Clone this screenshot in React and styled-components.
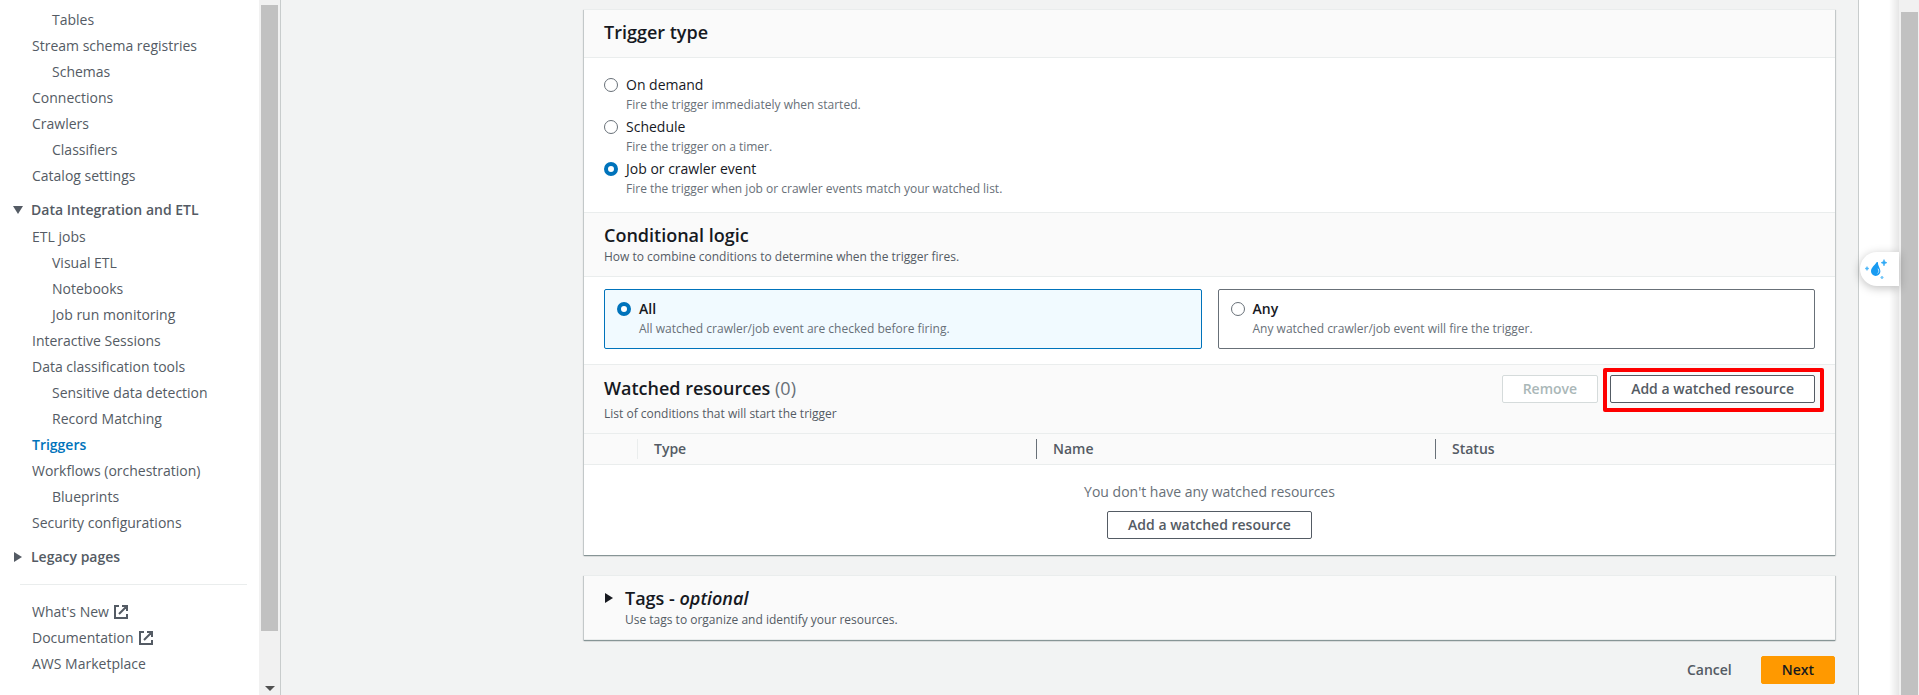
import React, { useState } from 'react';
import styled, { createGlobalStyle } from 'styled-components';

const GlobalStyle = createGlobalStyle`
  *, *::before, *::after { box-sizing: border-box; }
  body {
    margin: 0;
    background: #fff;
    color: #16191f;
    font-family: "Open Sans", "Noto Sans", sans-serif;
    font-size: 14px;
    line-height: 22px;
  }
  button { font: inherit; cursor: pointer; }
  h2, p { margin: 0; }
`;

const Shell = styled.div`
  display: flex;
  height: 100vh;
  overflow: hidden;
`;

/* ---------- side navigation ---------- */

const Sidebar = styled.aside`
  display: flex;
  flex: none;
  width: 281px;
  background: #fff;
  border-right: 1px solid #c8cccc;
`;

const NavScroll = styled.nav`
  flex: 1;
  overflow: hidden;
  padding-top: 7px;
`;

const NavList = styled.ul`
  list-style: none;
  margin: 0;
  padding: 0;
`;

const NavItem = styled.li`
  display: flex;
  align-items: center;
  height: 26px;
  padding-left: ${(p) => (p.$nested ? 52 : 32)}px;
`;

const NavLink = styled.a`
  display: flex;
  align-items: center;
  gap: 5px;
  color: ${(p) => (p.$active ? '#0073bb' : '#545b64')};
  font-weight: ${(p) => (p.$active ? 600 : 400)};
  text-decoration: none;
  white-space: nowrap;
`;

const NavHeading = styled.button`
  display: flex;
  align-items: center;
  gap: 8px;
  margin: 10px 0 3px;
  padding: 0 0 0 13px;
  border: 0;
  background: none;
  color: #545b64;
  font-weight: 600;
  line-height: 22px;
`;

const NavDivider = styled.hr`
  margin: 16px 12px 14px 20px;
  border: 0;
  border-top: 1px solid #eaeded;
`;

const Track = styled.div`
  display: flex;
  flex-direction: column;
  flex: none;
  width: ${(p) => p.$width}px;
  padding: ${(p) => p.$pad};
  background: #f1f1f1;
`;

const Thumb = styled.div`
  flex: ${(p) => p.$grow} 0 0;
  background: #c1c1c1;
`;

const TrackEnd = styled.div`
  display: flex;
  align-items: flex-end;
  justify-content: center;
  flex: 2 0 0;
  padding-bottom: 4px;
`;

/* ---------- content ---------- */

const Main = styled.main`
  flex: 1;
  min-width: 0;
  padding: 9px 23px 0 303px;
  background: #f2f3f3;
  border-right: 1px solid #c8cccc;
`;

const Form = styled.form`
  display: flex;
  flex-direction: column;
`;

const Card = styled.section`
  margin-bottom: 20px;
  border-top: 1px solid #eaeded;
  background: #fff;
  box-shadow: 0 1px 0 0 #879596, 0 1px 1px 0 rgba(0, 28, 36, 0.3),
    1px 1px 1px 0 rgba(0, 28, 36, 0.15), -1px 1px 1px 0 rgba(0, 28, 36, 0.15);
`;

const SectionHeader = styled.header`
  display: flex;
  align-items: flex-start;
  justify-content: space-between;
  padding: ${(p) => p.$pad};
  background: #fafafa;
  border-top: ${(p) => (p.$first ? '0' : '1px solid #eaeded')};
  border-bottom: 1px solid #eaeded;
`;

const HeaderText = styled.div`
  padding-top: 2px;
`;

const Title = styled.h2`
  display: block;
  font-size: 18px;
  font-weight: 600;
  line-height: 22px;
`;

const Counter = styled.span`
  color: #687078;
  font-weight: 400;
`;

const Description = styled.p`
  display: block;
  margin-top: ${(p) => p.$gap || 0}px;
  color: ${(p) => (p.$muted ? '#687078' : '#545b64')};
  font-size: 12px;
  line-height: 18px;
`;

const RadioGroup = styled.div`
  display: grid;
  gap: 2px;
  padding: 16px 20px 14px;
`;

const Tiles = styled.div`
  display: grid;
  grid-template-columns: 1fr 1fr;
  gap: 16px;
  padding: 12px 20px 15px;
`;

const Option = styled.label`
  display: flex;
  gap: 8px;
  cursor: pointer;
`;

const Tile = styled(Option)`
  padding: 8px 12px 10px;
  border: 1px solid ${(p) => (p.$checked ? '#0073bb' : '#687078')};
  border-radius: 2px;
  background: ${(p) => (p.$checked ? '#f1faff' : '#fff')};
`;

const Radio = styled.input.attrs({ type: 'radio' })`
  appearance: none;
  flex: none;
  width: 14px;
  height: 14px;
  margin: 4px 0 0;
  border: 1px solid #687078;
  border-radius: 50%;
  background: #fff;

  &:checked {
    border: 4px solid #0073bb;
  }
`;

const OptionText = styled.span`
  display: flex;
  flex-direction: column;
`;

const OptionLabel = styled.span`
  font-weight: ${(p) => (p.$strong ? 600 : 400)};
`;

const Actions = styled.div`
  display: flex;
  gap: 12px;
`;

const Button = styled.button`
  height: 28px;
  padding: 0 20px;
  border: 1px solid #545b64;
  border-radius: 2px;
  background: #fff;
  color: #545b64;
  font-weight: 600;
  line-height: 20px;

  &:disabled {
    border-color: #d5dbdb;
    color: #aab7b8;
  }
`;

const PrimaryButton = styled(Button)`
  border-color: #ff9900;
  background: #ff9900;
  color: #16191f;
`;

const LinkButton = styled(Button)`
  border-color: transparent;
  background: transparent;
`;

const Highlight = styled.div`
  position: relative;

  &::after {
    content: "";
    position: absolute;
    inset: -7px -9px -9px -7px;
    border: 4px solid #fe0000;
    border-radius: 2px;
    pointer-events: none;
  }
`;

const Table = styled.table`
  width: 100%;
  table-layout: fixed;
  border-collapse: separate;
  border-spacing: 0;
`;

const HeadCell = styled.th`
  width: ${(p) => (p.$select ? '54px' : 'auto')};
  padding: 5px 0;
  background: #fafafa;
  border-bottom: 1px solid #eaeded;
  color: #545b64;
  font-weight: 600;
  text-align: left;
`;

const HeadContent = styled.div`
  height: 20px;
  padding-left: 16px;
  border-right: ${(p) => (p.$edge ? `1px solid ${p.$edge}` : '0')};
  line-height: 20px;
`;

const EmptyCell = styled.td`
  padding: 16px 20px;
  color: #687078;
`;

const EmptyState = styled.div`
  display: flex;
  flex-direction: column;
  align-items: center;
  gap: 8px;
`;

const TagsToggle = styled.button`
  display: flex;
  gap: 11px;
  width: 100%;
  padding: 11px 20px 10px;
  border: 0;
  border-bottom: 1px solid #eaeded;
  background: #fafafa;
  color: #16191f;
  text-align: left;
`;

const TagsArrow = styled.span`
  display: flex;
  align-items: center;
  height: 22px;
`;

const Footer = styled.div`
  display: flex;
  justify-content: flex-end;
  gap: 8px;
  margin-top: -4px;
`;

/* ---------- right edge ---------- */

const HelpRail = styled.aside`
  position: relative;
  flex: none;
  width: 40px;
  background: linear-gradient(to left, #e6e6e6, #fff 10px);
`;

const Assistant = styled.button`
  position: absolute;
  top: 252px;
  right: 0;
  display: flex;
  align-items: center;
  width: 39px;
  height: 34px;
  padding: 0 0 0 3px;
  border: 0;
  border-radius: 17px 0 0 17px;
  background: #fff;
  box-shadow: 0 2px 10px rgba(0, 0, 0, 0.25);
`;

const Triangle = ({ dir, fill = '#545b64' }) => (
  <svg width="10" height="10" viewBox="0 0 10 10" aria-hidden="true">
    <path d={dir === 'down' ? 'M0 1h10L5 9z' : 'M1 0l8 5-8 5z'} fill={fill} />
  </svg>
);

const ExternalIcon = () => (
  <svg width="14" height="14" viewBox="0 0 14 14" fill="none" stroke="#545b64" strokeWidth="2" aria-hidden="true">
    <path d="M5 1H1v12h12V9M8 1h5v5M13 1L5 9" />
  </svg>
);

const DropIcon = () => (
  <svg width="24" height="22" viewBox="0 0 24 22" aria-hidden="true">
    <path d="M13.800 4C11.500 7.500 8 9.700 8 13.300a4.700 4.700 0 0 0 9.400 0c0-2.800-2.600-5.300-2.600-9.300z" fill="#189bf2" />
    <path d="M15.200 11c1 1.600.8 3.200-.4 4.200" stroke="#bfe4ff" fill="none" strokeLinecap="round" />
    <path d="M21 1.500l.9 2.300 2.100.9-2.100.9L21 8l-.9-2.400-2.100-.9 2.100-.9z" fill="#2ea8f5" stroke="#2ea8f5" strokeWidth=".5" />
    <path d="M4 8.500l.7 1.300 1.300.7-1.300.7L4 12.500l-.7-1.300L2 10.500l1.300-.7z" fill="#4cb6f8" stroke="#4cb6f8" strokeWidth=".5" />
    <path d="M19 18.200l.4.900.9.400-.9.400-.4.900-.4-.9-.9-.4.9-.4z" fill="#6cc4f9" stroke="#6cc4f9" />
  </svg>
);

const CATALOG = [
  { label: 'Tables', nested: true },
  { label: 'Stream schema registries' },
  { label: 'Schemas', nested: true },
  { label: 'Connections' },
  { label: 'Crawlers' },
  { label: 'Classifiers', nested: true },
  { label: 'Catalog settings' },
];

const ETL = [
  { label: 'ETL jobs' },
  { label: 'Visual ETL', nested: true },
  { label: 'Notebooks', nested: true },
  { label: 'Job run monitoring', nested: true },
  { label: 'Interactive Sessions' },
  { label: 'Data classification tools' },
  { label: 'Sensitive data detection', nested: true },
  { label: 'Record Matching', nested: true },
  { label: 'Triggers', active: true },
  { label: 'Workflows (orchestration)' },
  { label: 'Blueprints', nested: true },
  { label: 'Security configurations' },
];

const RESOURCES = [
  { label: "What's New", external: true },
  { label: 'Documentation', external: true },
  { label: 'AWS Marketplace' },
];

const TRIGGER_TYPES = [
  { id: 'demand', label: 'On demand', hint: 'Fire the trigger immediately when started.' },
  { id: 'schedule', label: 'Schedule', hint: 'Fire the trigger on a timer.' },
  { id: 'event', label: 'Job or crawler event', hint: 'Fire the trigger when job or crawler events match your watched list.' },
];

const LOGIC = [
  { id: 'all', label: 'All', hint: 'All watched crawler/job event are checked before firing.' },
  { id: 'any', label: 'Any', hint: 'Any watched crawler/job event will fire the trigger.' },
];

const NavGroup = ({ items }) => (
  <NavList>
    {items.map(({ label, nested, active, external }) => (
      <NavItem key={label} $nested={nested}>
        <NavLink href="#" $active={active} aria-current={active ? 'page' : undefined}>
          {label}
          {external && <ExternalIcon />}
        </NavLink>
      </NavItem>
    ))}
  </NavList>
);

const OptionBody = ({ label, hint, strong }) => (
  <OptionText>
    <OptionLabel $strong={strong}>{label}</OptionLabel>
    <Description as="span" $muted>{hint}</Description>
  </OptionText>
);

export default function App() {
  const [type, setType] = useState('event');
  const [logic, setLogic] = useState('all');

  return (
    <Shell>
      <GlobalStyle />
      <Sidebar>
        <NavScroll aria-label="AWS Glue">
          <NavGroup items={CATALOG} />
          <NavHeading type="button" aria-expanded="true">
            <Triangle dir="down" />
            Data Integration and ETL
          </NavHeading>
          <NavGroup items={ETL} />
          <NavHeading type="button" aria-expanded="false">
            <Triangle dir="right" />
            Legacy pages
          </NavHeading>
          <NavDivider />
          <NavGroup items={RESOURCES} />
        </NavScroll>
        <Track $width={21} $pad="5px 2px 0 2px" aria-hidden="true">
          <Thumb $grow={21} />
          <TrackEnd>
            <svg width="10" height="5" viewBox="0 0 10 5">
              <path d="M0 0h10L5 5z" fill="#505050" />
            </svg>
          </TrackEnd>
        </Track>
      </Sidebar>

      <Main>
        <Form onSubmit={(e) => e.preventDefault()}>
          <Card>
            <SectionHeader $first $pad="11px 20px 14px">
              <Title id="trigger-type">Trigger type</Title>
            </SectionHeader>
            <RadioGroup role="radiogroup" aria-labelledby="trigger-type">
              {TRIGGER_TYPES.map((t) => (
                <Option key={t.id}>
                  <Radio name="type" checked={type === t.id} onChange={() => setType(t.id)} />
                  <OptionBody label={t.label} hint={t.hint} />
                </Option>
              ))}
            </RadioGroup>

            <SectionHeader $pad="9px 20px 10px">
              <HeaderText>
                <Title id="logic">Conditional logic</Title>
                <Description $gap={2}>How to combine conditions to determine when the trigger fires.</Description>
              </HeaderText>
            </SectionHeader>
            <Tiles role="radiogroup" aria-labelledby="logic">
              {LOGIC.map((l) => (
                <Tile key={l.id} $checked={logic === l.id}>
                  <Radio name="logic" checked={logic === l.id} onChange={() => setLogic(l.id)} />
                  <OptionBody label={l.label} hint={l.hint} strong />
                </Tile>
              ))}
            </Tiles>

            <SectionHeader $pad="10px 20px">
              <HeaderText>
                <Title>
                  Watched resources <Counter>(0)</Counter>
                </Title>
                <Description $gap={6}>List of conditions that will start the trigger</Description>
              </HeaderText>
              <Actions>
                <Button type="button" disabled>Remove</Button>
                <Highlight>
                  <Button type="button">Add a watched resource</Button>
                </Highlight>
              </Actions>
            </SectionHeader>
            <Table>
              <thead>
                <tr>
                  <HeadCell $select aria-label="Selection">
                    <HeadContent $edge="#eaeded" />
                  </HeadCell>
                  <HeadCell scope="col">
                    <HeadContent $edge="#687078">Type</HeadContent>
                  </HeadCell>
                  <HeadCell scope="col">
                    <HeadContent $edge="#687078">Name</HeadContent>
                  </HeadCell>
                  <HeadCell scope="col">
                    <HeadContent>Status</HeadContent>
                  </HeadCell>
                </tr>
              </thead>
              <tbody>
                <tr>
                  <EmptyCell colSpan={4}>
                    <EmptyState>
                      <p>You don't have any watched resources</p>
                      <Button type="button">Add a watched resource</Button>
                    </EmptyState>
                  </EmptyCell>
                </tr>
              </tbody>
            </Table>
          </Card>

          <Card>
            <TagsToggle type="button" aria-expanded="false">
              <TagsArrow>
                <Triangle dir="right" fill="#16191f" />
              </TagsArrow>
              <span>
                <Title as="span">
                  Tags - <em>optional</em>
                </Title>
                <Description as="span" $gap={2}>Use tags to organize and identify your resources.</Description>
              </span>
            </TagsToggle>
          </Card>

          <Footer>
            <LinkButton type="button">Cancel</LinkButton>
            <PrimaryButton type="submit">Next</PrimaryButton>
          </Footer>
        </Form>
      </Main>

      <HelpRail>
        <Assistant type="button" aria-label="Assistant">
          <DropIcon />
        </Assistant>
      </HelpRail>
      <Track $width={20} $pad="12px 1px 0 2px" aria-hidden="true">
        <Thumb $grow={1} />
      </Track>
    </Shell>
  );
}
